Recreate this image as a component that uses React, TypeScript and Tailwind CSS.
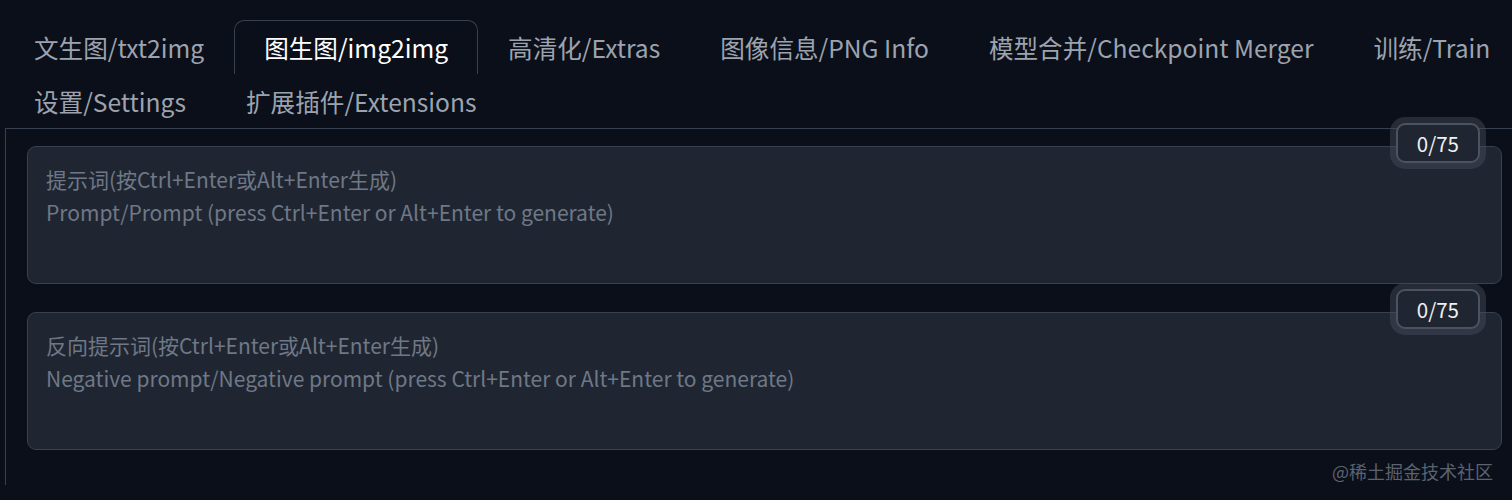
import React from 'react';

const row1 = ['文生图/txt2img', '图生图/img2img', '高清化/Extras', '图像信息/PNG Info', '模型合并/Checkpoint Merger', '训练/Train'];
const row2 = ['设置/Settings', '扩展插件/Extensions'];

function Tab({ label, active }: { label: string; active?: boolean }) {
  return (
    <div
      className={
        'h-[54px] px-[29px] flex items-center whitespace-nowrap text-[24.6px] border border-b-0 rounded-t-[10px] ' +
        (active ? 'text-white border-[#374151]' : 'text-[#9ca3af] border-transparent')
      }
    >
      {label}
    </div>
  );
}

function PromptBox({ placeholder }: { placeholder: string }) {
  return (
    <div className="relative">
      <textarea
        readOnly
        placeholder={placeholder}
        className="block w-full h-[138px] resize-none rounded-[9px] border border-[#374151] bg-[#1f2632] px-[18px] pt-[16px] text-[21px] leading-[33px] text-white placeholder:text-[#6f7886] outline-none"
      />
      <div className="absolute -top-[23px] right-[22px] h-[40px] px-[19px] flex items-center rounded-[9px] border-2 border-[#4b5360] bg-[#1f2632] text-[20.5px] text-[#eef0f3] shadow-[0_0_0_6px_rgba(70,78,92,0.45)]">
        0/75
      </div>
    </div>
  );
}

export default function App() {
  return (
    <div className="min-h-screen w-full overflow-hidden bg-[#0b0f19] font-['Noto_Sans_CJK_SC','Noto_Sans',sans-serif]">
      <div className="pt-[20px] pl-[4px]">
        <div className="flex">
          {row1.map((t, i) => (
            <Tab key={t} label={t} active={i === 1} />
          ))}
        </div>
        <div className="flex">
          {row2.map((t) => (
            <Tab key={t} label={t} />
          ))}
        </div>
      </div>
      <div className="ml-[5px] border-t border-l border-[#374151] pl-[21px] pr-[10px] pt-[17px]">
        <PromptBox placeholder={'提示词(按Ctrl+Enter或Alt+Enter生成)\nPrompt/Prompt (press Ctrl+Enter or Alt+Enter to generate)'} />
        <div className="h-[28px]" />
        <PromptBox placeholder={'反向提示词(按Ctrl+Enter或Alt+Enter生成)\nNegative prompt/Negative prompt (press Ctrl+Enter or Alt+Enter to generate)'} />
        <div className="flex justify-end pr-[9px] pt-[8px] text-[18px] text-[#5b6270]">@稀土掘金技术社区</div>
      </div>
    </div>
  );
}
